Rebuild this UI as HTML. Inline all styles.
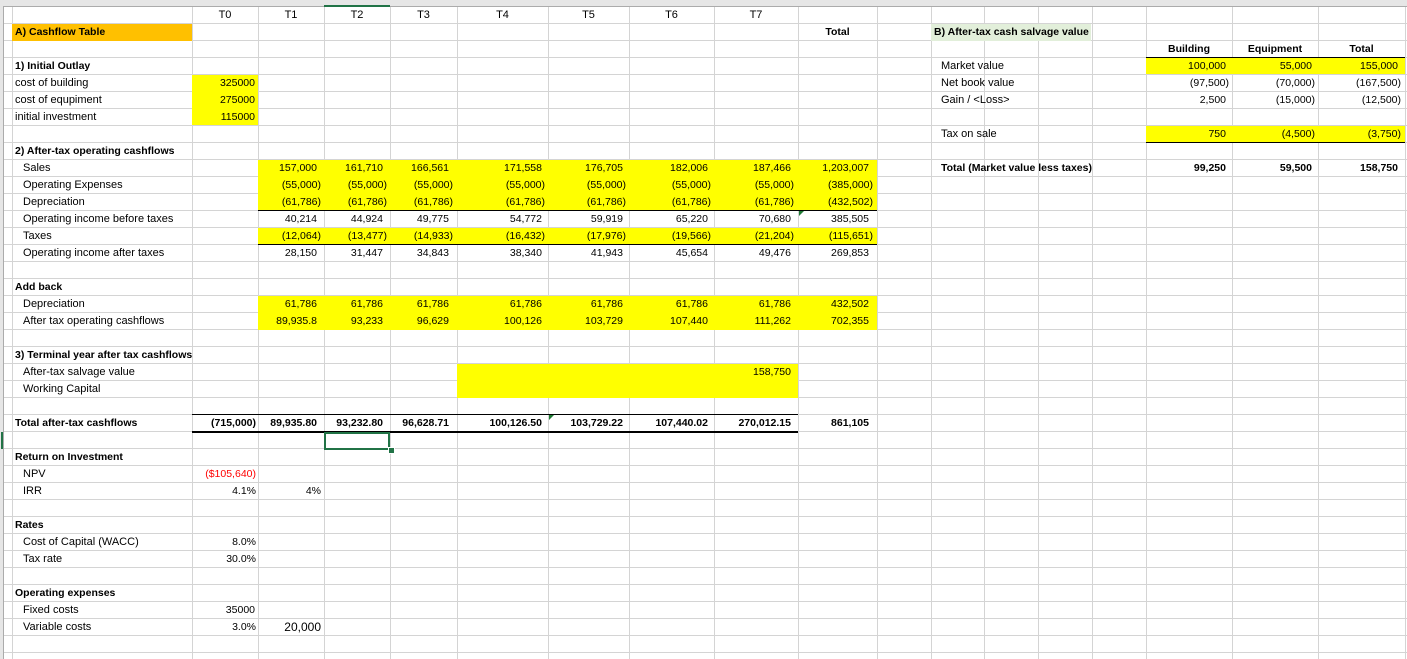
<!DOCTYPE html>
<html><head><meta charset="utf-8"><style>
body{margin:0;width:1407px;height:659px;overflow:hidden;background:#fff;position:relative;font-family:"Liberation Sans",Arial,sans-serif;color:#000}
.h{position:absolute;left:0;top:6px;width:1407px;height:653px;background:repeating-linear-gradient(to bottom,#d4d4d4 0 1px,transparent 1px 17px)}
.v{position:absolute;top:6px;width:1px;height:653px;background:#d4d4d4}
.f{position:absolute;background:#ffff00}
.c{position:absolute;height:16px;line-height:16px;white-space:nowrap;font-size:10.5px}
.l{font-size:11px}
.b{font-weight:bold;font-size:10.5px}
.bl{position:absolute;height:1px;background:#000}
</style></head><body>
<div class="h"></div>
<div class="v" style="left:3px"></div><div class="v" style="left:12px"></div><div class="v" style="left:192px"></div><div class="v" style="left:258px"></div><div class="v" style="left:324px"></div><div class="v" style="left:390px"></div><div class="v" style="left:457px"></div><div class="v" style="left:548px"></div><div class="v" style="left:629px"></div><div class="v" style="left:714px"></div><div class="v" style="left:798px"></div><div class="v" style="left:877px"></div><div class="v" style="left:931px"></div><div class="v" style="left:984px"></div><div class="v" style="left:1038px"></div><div class="v" style="left:1092px"></div><div class="v" style="left:1146px"></div><div class="v" style="left:1232px"></div><div class="v" style="left:1318px"></div><div class="v" style="left:1405px"></div>
<div style="position:absolute;left:0;top:0;width:1407px;height:6px;background:#e6e6e6;border-bottom:1px solid #ababab"></div>
<div style="position:absolute;left:324px;top:5px;width:66px;height:2px;background:#217346"></div>
<div style="position:absolute;left:0;top:6px;width:3px;height:653px;background:#e6e6e6;border-right:1px solid #ababab"></div>
<div style="position:absolute;left:1px;top:432px;width:2px;height:17px;background:#217346"></div>

<!-- fills -->
<div style="position:absolute;left:12px;top:24px;width:180px;height:17px;background:#ffc000"></div>
<div style="position:absolute;left:931px;top:24px;width:160px;height:17px;background:#e2efda"></div>
<div class="f" style="left:192px;top:75px;width:66px;height:50px"></div>
<div class="f" style="left:258px;top:160px;width:619px;height:51px"></div>
<div class="f" style="left:258px;top:228px;width:619px;height:17px"></div>
<div class="f" style="left:258px;top:296px;width:619px;height:34px"></div>
<div class="f" style="left:457px;top:364px;width:341px;height:34px"></div>
<div class="f" style="left:1146px;top:58px;width:259px;height:16px"></div>
<div class="f" style="left:1146px;top:126px;width:259px;height:16px"></div>
<!-- borders -->
<div class="bl" style="left:258px;top:210px;width:619px"></div>
<div class="bl" style="left:258px;top:244px;width:619px"></div>
<div class="bl" style="left:1146px;top:57px;width:259px"></div>
<div class="bl" style="left:1146px;top:142px;width:259px"></div>
<div class="bl" style="left:192px;top:414px;width:606px"></div>
<div class="bl" style="left:192px;top:431px;width:606px;height:2px"></div>
<div style="position:absolute;left:324px;top:432px;width:62px;height:14px;border:2px solid #217346"></div>
<div style="position:absolute;left:388px;top:447px;width:5px;height:5px;background:#217346;border:1px solid #fff"></div>
<div style="position:absolute;left:799px;top:211px;width:0;height:0;border-top:5px solid #1e7b34;border-right:5px solid transparent"></div>
<div style="position:absolute;left:549px;top:415px;width:0;height:0;border-top:5px solid #1e7b34;border-right:5px solid transparent"></div>

<!-- headers -->
<div class="c l" style="top:7px;left:192px;width:66px;text-align:center">T0</div>
<div class="c l" style="top:7px;left:258px;width:66px;text-align:center">T1</div>
<div class="c l" style="top:7px;left:324px;width:66px;text-align:center">T2</div>
<div class="c l" style="top:7px;left:390px;width:67px;text-align:center">T3</div>
<div class="c l" style="top:7px;left:457px;width:91px;text-align:center">T4</div>
<div class="c l" style="top:7px;left:548px;width:81px;text-align:center">T5</div>
<div class="c l" style="top:7px;left:629px;width:85px;text-align:center">T6</div>
<div class="c l" style="top:7px;left:714px;width:84px;text-align:center">T7</div>
<div class="c b" style="top:24px;left:798px;width:79px;text-align:center">Total</div>

<!-- labels -->
<div class="c b" style="top:24px;left:15px">A) Cashflow Table</div>
<div class="c b" style="top:58px;left:15px">1) Initial Outlay</div>
<div class="c l" style="top:75px;left:15px">cost of building</div>
<div class="c l" style="top:92px;left:15px">cost of equpiment</div>
<div class="c l" style="top:109px;left:15px">initial investment</div>
<div class="c b" style="top:143px;left:15px">2) After-tax operating cashflows</div>
<div class="c l" style="top:160px;left:23px">Sales</div>
<div class="c l" style="top:177px;left:23px">Operating Expenses</div>
<div class="c l" style="top:194px;left:23px">Depreciation</div>
<div class="c l" style="top:211px;left:23px">Operating income before taxes</div>
<div class="c l" style="top:228px;left:23px">Taxes</div>
<div class="c l" style="top:245px;left:23px">Operating income after taxes</div>
<div class="c b" style="top:279px;left:15px">Add back</div>
<div class="c l" style="top:296px;left:23px">Depreciation</div>
<div class="c l" style="top:313px;left:23px">After tax operating cashflows</div>
<div class="c b" style="top:347px;left:15px">3) Terminal year after tax cashflows</div>
<div class="c l" style="top:364px;left:23px">After-tax salvage value</div>
<div class="c l" style="top:381px;left:23px">Working Capital</div>
<div class="c b" style="top:415px;left:15px">Total after-tax cashflows</div>
<div class="c b" style="top:449px;left:15px">Return on Investment</div>
<div class="c l" style="top:466px;left:23px">NPV</div>
<div class="c l" style="top:483px;left:23px">IRR</div>
<div class="c b" style="top:517px;left:15px">Rates</div>
<div class="c l" style="top:534px;left:23px">Cost of Capital (WACC)</div>
<div class="c l" style="top:551px;left:23px">Tax rate</div>
<div class="c b" style="top:585px;left:15px">Operating expenses</div>
<div class="c l" style="top:602px;left:23px">Fixed costs</div>
<div class="c l" style="top:619px;left:23px">Variable costs</div>

<!-- C values -->
<div class="c" style="top:75px;right:1152px">325000</div>
<div class="c" style="top:92px;right:1152px">275000</div>
<div class="c" style="top:109px;right:1152px">115000</div>
<div class="c" style="top:466px;right:1151px;color:#ff0000">($105,640)</div>
<div class="c" style="top:483px;right:1151px">4.1%</div>
<div class="c" style="top:483px;right:1086px">4%</div>
<div class="c" style="top:534px;right:1151px">8.0%</div>
<div class="c" style="top:551px;right:1151px">30.0%</div>
<div class="c" style="top:602px;right:1152px">35000</div>
<div class="c" style="top:619px;right:1151px">3.0%</div>
<div class="c" style="top:619px;right:1086px;font-size:12px">20,000</div>

<!-- Sales rows -->
<div class="c" style="top:160px;right:1090px">157,000</div><div class="c" style="top:160px;right:1024px">161,710</div><div class="c" style="top:160px;right:958px">166,561</div><div class="c" style="top:160px;right:865px">171,558</div><div class="c" style="top:160px;right:784px">176,705</div><div class="c" style="top:160px;right:699px">182,006</div><div class="c" style="top:160px;right:616px">187,466</div><div class="c" style="top:160px;right:538px">1,203,007</div>
<div class="c" style="top:177px;right:1086px">(55,000)</div><div class="c" style="top:177px;right:1020px">(55,000)</div><div class="c" style="top:177px;right:954px">(55,000)</div><div class="c" style="top:177px;right:862px">(55,000)</div><div class="c" style="top:177px;right:781px">(55,000)</div><div class="c" style="top:177px;right:696px">(55,000)</div><div class="c" style="top:177px;right:613px">(55,000)</div><div class="c" style="top:177px;right:534px">(385,000)</div>
<div class="c" style="top:194px;right:1086px">(61,786)</div><div class="c" style="top:194px;right:1020px">(61,786)</div><div class="c" style="top:194px;right:954px">(61,786)</div><div class="c" style="top:194px;right:862px">(61,786)</div><div class="c" style="top:194px;right:781px">(61,786)</div><div class="c" style="top:194px;right:696px">(61,786)</div><div class="c" style="top:194px;right:613px">(61,786)</div><div class="c" style="top:194px;right:534px">(432,502)</div>
<div class="c" style="top:211px;right:1090px">40,214</div><div class="c" style="top:211px;right:1024px">44,924</div><div class="c" style="top:211px;right:958px">49,775</div><div class="c" style="top:211px;right:865px">54,772</div><div class="c" style="top:211px;right:784px">59,919</div><div class="c" style="top:211px;right:699px">65,220</div><div class="c" style="top:211px;right:616px">70,680</div><div class="c" style="top:211px;right:538px">385,505</div>
<div class="c" style="top:228px;right:1086px">(12,064)</div><div class="c" style="top:228px;right:1020px">(13,477)</div><div class="c" style="top:228px;right:954px">(14,933)</div><div class="c" style="top:228px;right:862px">(16,432)</div><div class="c" style="top:228px;right:781px">(17,976)</div><div class="c" style="top:228px;right:696px">(19,566)</div><div class="c" style="top:228px;right:613px">(21,204)</div><div class="c" style="top:228px;right:534px">(115,651)</div>
<div class="c" style="top:245px;right:1090px">28,150</div><div class="c" style="top:245px;right:1024px">31,447</div><div class="c" style="top:245px;right:958px">34,843</div><div class="c" style="top:245px;right:865px">38,340</div><div class="c" style="top:245px;right:784px">41,943</div><div class="c" style="top:245px;right:699px">45,654</div><div class="c" style="top:245px;right:616px">49,476</div><div class="c" style="top:245px;right:538px">269,853</div>
<div class="c" style="top:296px;right:1090px">61,786</div><div class="c" style="top:296px;right:1024px">61,786</div><div class="c" style="top:296px;right:958px">61,786</div><div class="c" style="top:296px;right:865px">61,786</div><div class="c" style="top:296px;right:784px">61,786</div><div class="c" style="top:296px;right:699px">61,786</div><div class="c" style="top:296px;right:616px">61,786</div><div class="c" style="top:296px;right:538px">432,502</div>
<div class="c" style="top:313px;right:1090px">89,935.8</div><div class="c" style="top:313px;right:1024px">93,233</div><div class="c" style="top:313px;right:958px">96,629</div><div class="c" style="top:313px;right:865px">100,126</div><div class="c" style="top:313px;right:784px">103,729</div><div class="c" style="top:313px;right:699px">107,440</div><div class="c" style="top:313px;right:616px">111,262</div><div class="c" style="top:313px;right:538px">702,355</div>
<div class="c" style="top:364px;right:616px">158,750</div>
<div class="c b" style="top:415px;right:1151px">(715,000)</div><div class="c b" style="top:415px;right:1090px">89,935.80</div><div class="c b" style="top:415px;right:1024px">93,232.80</div><div class="c b" style="top:415px;right:958px">96,628.71</div><div class="c b" style="top:415px;right:865px">100,126.50</div><div class="c b" style="top:415px;right:784px">103,729.22</div><div class="c b" style="top:415px;right:699px">107,440.02</div><div class="c b" style="top:415px;right:616px">270,012.15</div><div class="c b" style="top:415px;right:538px">861,105</div>

<!-- Section B -->
<div class="c b" style="top:24px;left:934px">B) After-tax cash salvage value</div>
<div class="c b" style="top:41px;left:1146px;width:86px;text-align:center">Building</div>
<div class="c b" style="top:41px;left:1232px;width:86px;text-align:center">Equipment</div>
<div class="c b" style="top:41px;left:1318px;width:87px;text-align:center">Total</div>
<div class="c l" style="top:58px;left:941px">Market value</div>
<div class="c l" style="top:75px;left:941px">Net book value</div>
<div class="c l" style="top:92px;left:941px">Gain / &lt;Loss&gt;</div>
<div class="c l" style="top:126px;left:941px">Tax on sale</div>
<div class="c b" style="top:160px;left:941px">Total (Market value less taxes)</div>
<div class="c" style="top:58px;right:181px">100,000</div><div class="c" style="top:58px;right:95px">55,000</div><div class="c" style="top:58px;right:9px">155,000</div>
<div class="c" style="top:75px;right:178px">(97,500)</div><div class="c" style="top:75px;right:92px">(70,000)</div><div class="c" style="top:75px;right:6px">(167,500)</div>
<div class="c" style="top:92px;right:181px">2,500</div><div class="c" style="top:92px;right:92px">(15,000)</div><div class="c" style="top:92px;right:6px">(12,500)</div>
<div class="c" style="top:126px;right:181px">750</div><div class="c" style="top:126px;right:92px">(4,500)</div><div class="c" style="top:126px;right:6px">(3,750)</div>
<div class="c b" style="top:160px;right:181px">99,250</div><div class="c b" style="top:160px;right:95px">59,500</div><div class="c b" style="top:160px;right:9px">158,750</div>
</body></html>
